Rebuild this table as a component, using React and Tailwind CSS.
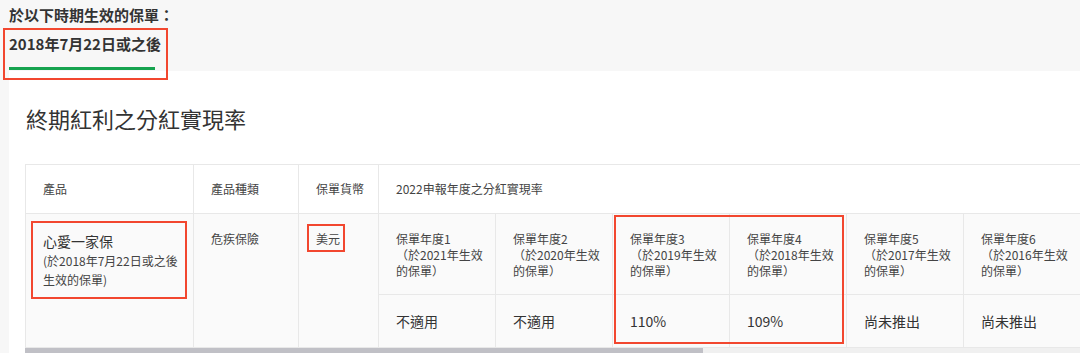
import React from "react";

const years = [
  { n: 1, y: 2021, v: "不適用" },
  { n: 2, y: 2020, v: "不適用" },
  { n: 3, y: 2019, v: "110%" },
  { n: 4, y: 2018, v: "109%" },
  { n: 5, y: 2017, v: "尚未推出" },
  { n: 6, y: 2016, v: "尚未推出" },
];

const App = () => {
  return (
    <div className="w-[1080px] h-[353px] overflow-hidden bg-[#f7f7f7] font-['Noto_Sans_CJK_TC','Noto_Sans',sans-serif] text-[#333]">
      {/* period tabs */}
      <div className="h-[71px] pl-[9px] pt-[4px]">
        <div className="text-[15px] font-bold leading-[22px]">於以下時期生效的保單：</div>
        <div className="relative mt-[7px] w-[146px]">
          <div className="whitespace-nowrap text-[15px] font-bold leading-[22px]">2018年7月22日或之後</div>
          <div className="mt-[12px] h-[3px] bg-[#16a34f]" />
          <span className="absolute -left-[6px] -top-[5px] w-[165px] h-[52px] border-2 border-[#f2472f] z-10" />
        </div>
      </div>

      <div className="ml-[9px] h-[282px] bg-white pl-[16px] pt-[32px] overflow-hidden">
        <h2 className="pl-[1px] text-[22px] leading-[30px] text-[#333]">終期紅利之分紅實現率</h2>

        <div className="relative mt-[31px] w-[1300px]">
          <table className="table-fixed border-collapse text-[12px] text-[#444]">
            <colgroup>
              <col className="w-[168px]" />
              <col className="w-[105px]" />
              <col className="w-[80px]" />
              {years.map((y) => (
                <col key={y.n} className={y.n === 6 ? "w-[160px]" : "w-[117px]"} />
              ))}
            </colgroup>
            <tbody>
              <tr className="h-[49px] bg-white">
                <td className="border border-[#e8e8e8] pl-[17px] align-middle">產品</td>
                <td className="border border-[#e8e8e8] pl-[17px] align-middle">產品種類</td>
                <td className="border border-[#e8e8e8] pl-[17px] align-middle">保單貨幣</td>
                <td colSpan={years.length} className="border border-[#e8e8e8] pl-[17px] align-middle">
                  2022申報年度之分紅實現率
                </td>
              </tr>
              <tr className="h-[81px] bg-[#fafafa]">
                <td rowSpan={2} className="border border-[#e8e8e8] pl-[17px] pt-[17px] align-top">
                  <div className="text-[14px] leading-[20px] text-[#333]">心愛一家保</div>
                  <div className="leading-[19px]">
                    (於2018年7月22日或之後
                    <br />
                    生效的保單)
                  </div>
                </td>
                <td rowSpan={2} className="border border-[#e8e8e8] pl-[17px] pt-[17px] align-top leading-[16px]">
                  危疾保險
                </td>
                <td rowSpan={2} className="border border-[#e8e8e8] pl-[17px] pt-[17px] align-top leading-[16px]">
                  美元
                </td>
                {years.map((y) => (
                  <td key={y.n} className="border border-[#e8e8e8] pl-[17px] pt-[17px] align-top leading-[16px]">
                    保單年度{y.n}
                    <br />
                    （於{y.y}年生效
                    <br />
                    的保單）
                  </td>
                ))}
              </tr>
              <tr className="h-[53px] bg-[#fafafa]">
                {years.map((y) => (
                  <td key={y.n} className="border border-[#e8e8e8] pl-[17px] align-middle text-[14px] text-[#333]">
                    {y.v}
                  </td>
                ))}
              </tr>
            </tbody>
          </table>

          {/* scrollbar */}
          <div className="h-[6px] w-[1055px] bg-[#f0f0f0]">
            <div className="h-full w-[678px] bg-[#c0c0c6]" />
          </div>

          {/* highlight boxes */}
          <span className="absolute left-[6px] top-[57px] w-[156px] h-[78px] border-2 border-[#f2472f]" />
          <span className="absolute left-[282px] top-[60px] w-[38px] h-[28px] border-2 border-[#f2472f]" />
          <span className="absolute left-[589px] top-[51px] w-[230px] h-[129px] border-2 border-[#f2472f]" />
        </div>
      </div>
    </div>
  );
};

export default App;
